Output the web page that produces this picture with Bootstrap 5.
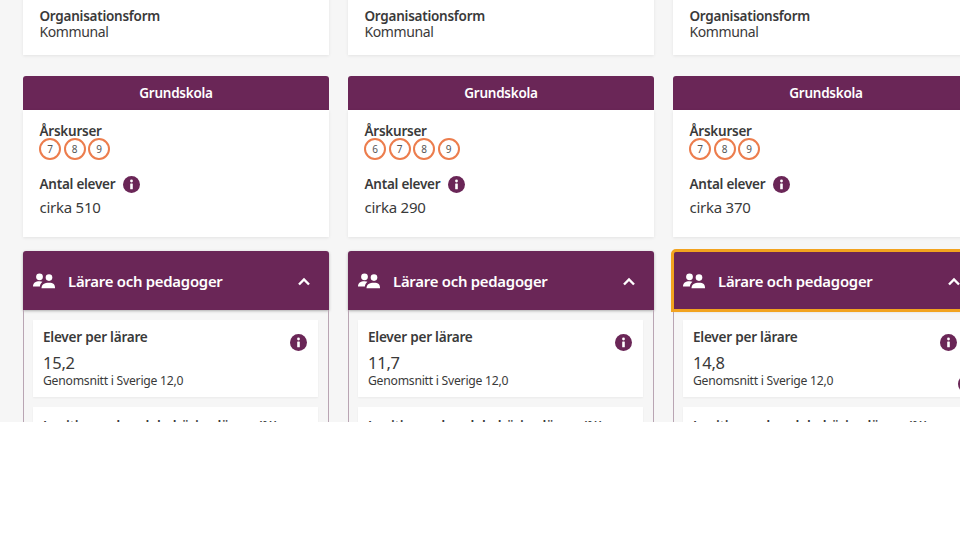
<!DOCTYPE html>
<html lang="sv"><head><meta charset="utf-8">
<link href="https://cdn.jsdelivr.net/npm/bootstrap@5.3.0/dist/css/bootstrap.min.css" rel="stylesheet">
<style>
html,body{background:#fff;margin:0;height:540px;overflow:hidden}
body{font-family:"Noto Sans","Liberation Sans",sans-serif;color:#3a3a3a;letter-spacing:-.25px}
.stage{height:422px;overflow:hidden;background:#f6f6f6;width:960px}
.colsrow{gap:19px;padding-left:23px;width:1020px;margin-top:-27px}
.sk{width:306px;flex:none}
.box{background:#fff;box-shadow:0 1px 3px rgba(0,0,0,.08)}
.b1{height:82px;padding:36px 17px 0 16.5px;font-size:14px;line-height:15px;margin-bottom:21px;letter-spacing:-.4px}
.lbl{font-weight:600;color:#3a3a3a;font-size:13.5px;letter-spacing:-.25px}
.head{background:#6a2657;color:#fff;text-align:center;font-weight:600;font-size:13.5px;height:34px;line-height:34px;border-radius:3px 3px 0 0}
.b2{height:127px;padding:15px 17px 0 16.5px;font-size:14px;margin-bottom:14px}
.b2 .ars{line-height:13px}
.dots{gap:2.5px;margin-left:-.5px}
.dot{width:22px;height:22px;border:2px solid #ec7d4d;border-radius:50%;font-size:10px;display:flex;align-items:center;justify-content:center;color:#555;letter-spacing:0}
.ae{margin-top:14px;line-height:20px;gap:8px}
.val{font-size:15px;margin-top:3px;line-height:20px}
.info{width:17px;height:17px;flex:none;display:block}
.acc{height:59px;background:#6a2657;color:#fff;border-radius:3px 3px 0 0;padding:1px 18px 0 10px;font-weight:600;font-size:14.9px;box-shadow:0 1px 3px rgba(0,0,0,.3)}
.acc.focused{outline:3px solid #f2a31f;outline-offset:-1px}
.acc .tx{margin-left:13px}
.panel{border:1px solid #b9a5b3;border-top:0;border-bottom:0;padding:10px 10px 0 9px;height:140px}
.stat{background:#fff;height:77px;padding:8px 10px;margin-bottom:10px;box-shadow:0 1px 2px rgba(0,0,0,.05);position:relative}
.stat .t{font-weight:600;font-size:13.6px;line-height:18px}
.stat .n{font-size:16.5px;line-height:20px;margin-top:7px}
.stat .s{font-size:12.2px;line-height:15px}
.stat .info{position:absolute;right:11px;top:14px}
.stat.st2{padding-top:10px}
.tt{font-size:13.5px;font-weight:600;line-height:18px}
.extra{position:absolute;left:958px;top:375px;width:18px;height:18px;border-radius:50%;background:#6a2657}
</style></head><body>
<div class="stage position-relative">
<svg width="0" height="0" class="position-absolute"><defs>
<symbol id="ii" viewBox="0 0 17 17"><circle cx="8.5" cy="8.5" r="8.5" fill="#6a2657"/><circle cx="8.5" cy="5" r="1.4" fill="#fff"/><rect x="7.2" y="7.4" width="2.6" height="5.8" rx=".5" fill="#fff"/></symbol>
<symbol id="pp" viewBox="0 0 22 16"><circle cx="6.5" cy="3.8" r="3.4" fill="#fff"/><circle cx="16" cy="4.6" r="3.3" fill="#fff"/><path d="M0 13.5C0 10 2.5 8.3 6.5 8.3c1.2 0 2.2.2 3 .5-1.5 1.2-2.4 2.8-2.6 4.7H0z" fill="#fff"/><path d="M8.5 15.2c0-3.6 3-5.4 7.5-5.4s6 1.8 6 5.4z" fill="#fff"/></symbol>
</defs></svg>
<div class="d-flex colsrow">

<div class="sk">
<div class="box b1"><div class="lbl">Organisationsform</div><div>Kommunal</div></div>
<div class="head">Grundskola</div>
<div class="box b2"><div class="lbl ars">Årskurser</div><div class="d-flex dots"><span class="dot">7</span><span class="dot">8</span><span class="dot">9</span></div>
<div class="d-flex align-items-center ae"><span class="lbl">Antal elever</span><svg class="info"><use href="#ii"/></svg></div><div class="val">cirka 510</div></div>
<div class="acc d-flex align-items-center"><svg width="22" height="16"><use href="#pp"/></svg><span class="tx flex-grow-1">Lärare och pedagoger</span><svg width="14" height="9" viewBox="0 0 14 9"><path d="M2 7.5l5-5 5 5" fill="none" stroke="#fff" stroke-width="2.4"/></svg></div>
<div class="panel"><div class="stat"><div class="t">Elever per lärare</div><svg class="info"><use href="#ii"/></svg><div class="n">15,2</div><div class="s">Genomsnitt i Sverige 12,0</div></div>
<div class="stat st2"><div class="tt">Legitimerade och behöriga lärare (%)</div></div></div>
</div>

<div class="sk">
<div class="box b1"><div class="lbl">Organisationsform</div><div>Kommunal</div></div>
<div class="head">Grundskola</div>
<div class="box b2"><div class="lbl ars">Årskurser</div><div class="d-flex dots"><span class="dot">6</span><span class="dot">7</span><span class="dot">8</span><span class="dot">9</span></div>
<div class="d-flex align-items-center ae"><span class="lbl">Antal elever</span><svg class="info"><use href="#ii"/></svg></div><div class="val">cirka 290</div></div>
<div class="acc d-flex align-items-center"><svg width="22" height="16"><use href="#pp"/></svg><span class="tx flex-grow-1">Lärare och pedagoger</span><svg width="14" height="9" viewBox="0 0 14 9"><path d="M2 7.5l5-5 5 5" fill="none" stroke="#fff" stroke-width="2.4"/></svg></div>
<div class="panel"><div class="stat"><div class="t">Elever per lärare</div><svg class="info"><use href="#ii"/></svg><div class="n">11,7</div><div class="s">Genomsnitt i Sverige 12,0</div></div>
<div class="stat st2"><div class="tt">Legitimerade och behöriga lärare (%)</div></div></div>
</div>

<div class="sk">
<div class="box b1"><div class="lbl">Organisationsform</div><div>Kommunal</div></div>
<div class="head">Grundskola</div>
<div class="box b2"><div class="lbl ars">Årskurser</div><div class="d-flex dots"><span class="dot">7</span><span class="dot">8</span><span class="dot">9</span></div>
<div class="d-flex align-items-center ae"><span class="lbl">Antal elever</span><svg class="info"><use href="#ii"/></svg></div><div class="val">cirka 370</div></div>
<div class="acc focused d-flex align-items-center"><svg width="22" height="16"><use href="#pp"/></svg><span class="tx flex-grow-1">Lärare och pedagoger</span><svg width="14" height="9" viewBox="0 0 14 9"><path d="M2 7.5l5-5 5 5" fill="none" stroke="#fff" stroke-width="2.4"/></svg></div>
<div class="panel"><div class="stat"><div class="t">Elever per lärare</div><svg class="info"><use href="#ii"/></svg><div class="n">14,8</div><div class="s">Genomsnitt i Sverige 12,0</div></div>
<div class="stat st2"><div class="tt">Legitimerade och behöriga lärare (%)</div></div></div>
</div>

</div>
<span class="extra"></span>
</div>
<script src="https://cdn.jsdelivr.net/npm/bootstrap@5.3.0/dist/js/bootstrap.bundle.min.js"></script>
</body></html>
